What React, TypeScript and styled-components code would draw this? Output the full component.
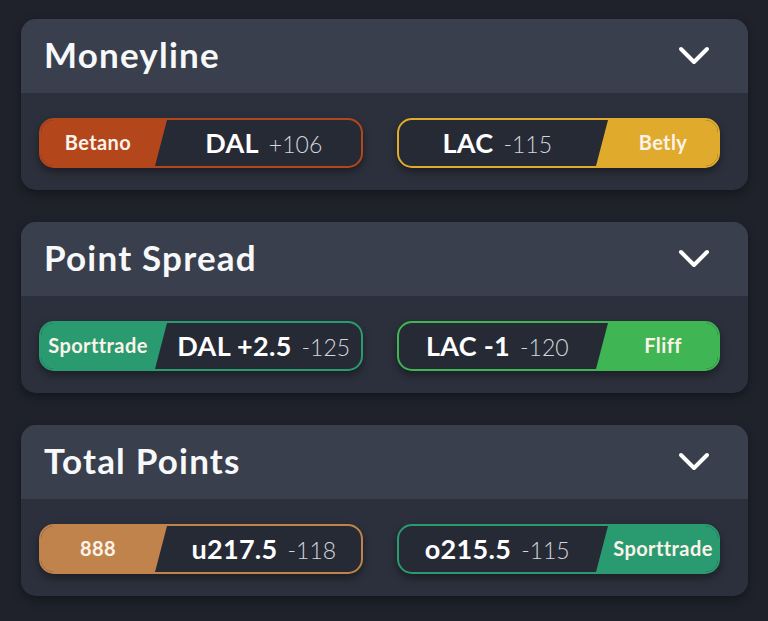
import React from 'react';
import styled, { createGlobalStyle } from 'styled-components';

type Side = 'left' | 'right';

interface Pick {
  book: string;
  color: string;
  label: string;
  odds: string;
  side: Side;
}

interface Market {
  title: string;
  picks: Pick[];
}

const markets: Market[] = [
  {
    title: 'Moneyline',
    picks: [
      { book: 'Betano', color: '#b4461b', label: 'DAL', odds: '+106', side: 'left' },
      { book: 'Betly', color: '#e0aa2c', label: 'LAC', odds: '-115', side: 'right' },
    ],
  },
  {
    title: 'Point Spread',
    picks: [
      { book: 'Sporttrade', color: '#2a9a70', label: 'DAL +2.5', odds: '-125', side: 'left' },
      { book: 'Fliff', color: '#3fb553', label: 'LAC -1', odds: '-120', side: 'right' },
    ],
  },
  {
    title: 'Total Points',
    picks: [
      { book: '888', color: '#c0834b', label: 'u217.5', odds: '-118', side: 'left' },
      { book: 'Sporttrade', color: '#2a9a70', label: 'o215.5', odds: '-115', side: 'right' },
    ],
  },
];

const GlobalStyle = createGlobalStyle`
  html, body {
    margin: 0;
    padding: 0;
    background: #1f222b;
  }
  body {
    font-family: Lato, "Open Sans", "Liberation Sans", sans-serif;
    color: #fff;
  }
`;

const Page = styled.div`
  display: flex;
  flex-direction: column;
  gap: 32px;
  padding: 19px 20px 25px 21px;
`;

const Card = styled.section`
  border-radius: 15px;
  overflow: hidden;
  background: #2c303c;
  box-shadow: 0 4px 10px rgba(0, 0, 0, 0.35);
`;

const Header = styled.div`
  height: 74px;
  display: flex;
  align-items: center;
  justify-content: space-between;
  padding: 0 38px 0 23px;
  background: #3a3f4d;
`;

const Title = styled.h2`
  margin: 0 0 4px;
  font-size: 35px;
  font-weight: 700;
  letter-spacing: 1.2px;
  color: #f7f8fa;
`;

const Body = styled.div`
  height: 97px;
  display: grid;
  grid-template-columns: 1fr 1fr;
  gap: 34px;
  padding: 25px 28px 0 18px;
  box-sizing: border-box;
`;

const Button = styled.div<{ $color: string; $side: Side }>`
  height: 50px;
  box-sizing: border-box;
  display: flex;
  flex-direction: ${({ $side }) => ($side === 'left' ? 'row' : 'row-reverse')};
  border: 2px solid ${({ $color }) => $color};
  border-radius: 15px;
  overflow: hidden;
  background: #262a35;
  box-shadow: 0 4px 8px rgba(0, 0, 0, 0.4);
`;

const Book = styled.div<{ $color: string; $side: Side }>`
  flex: 0 0 ${({ $side }) => ($side === 'left' ? '126px' : '122px')};
  display: flex;
  align-items: center;
  justify-content: center;
  padding: ${({ $side }) => ($side === 'left' ? '0 12px 2px 0' : '0 0 2px 12px')};
  box-sizing: border-box;
  background: ${({ $color }) => $color};
  clip-path: ${({ $side }) =>
    $side === 'left'
      ? 'polygon(0 0, 100% 0, calc(100% - 12px) 100%, 0 100%)'
      : 'polygon(12px 0, 100% 0, 100% 100%, 0 100%)'};
  font-size: 20px;
  font-weight: 700;
  letter-spacing: 0.4px;
  color: #fbf3ea;
  white-space: nowrap;
`;

const Line = styled.div`
  flex: 1;
  display: flex;
  align-items: center;
  justify-content: center;
  padding-bottom: 2px;
`;

const LineText = styled.span`
  white-space: nowrap;
  line-height: 1;
`;

const Label = styled.span`
  font-size: 27px;
  font-weight: 700;
  letter-spacing: 0.3px;
  color: #fff;
  margin-right: 10px;
`;

const Odds = styled.span`
  font-size: 23px;
  font-weight: 300;
  color: #d3d6dc;
`;

const Chevron = () => (
  <svg width="32" height="20" viewBox="0 0 32 20" fill="none">
    <path d="M3 3 L16 16 L29 3" stroke="#fff" strokeWidth="4" strokeLinecap="round" strokeLinejoin="round" />
  </svg>
);

const PickButton = ({ pick }: { pick: Pick }) => (
  <Button $color={pick.color} $side={pick.side}>
    <Book $color={pick.color} $side={pick.side}>
      {pick.book}
    </Book>
    <Line>
      <LineText>
        <Label>{pick.label}</Label>
        <Odds>{pick.odds}</Odds>
      </LineText>
    </Line>
  </Button>
);

const App = () => (
  <>
    <GlobalStyle />
    <Page>
      {markets.map((m) => (
        <Card key={m.title}>
          <Header>
            <Title>{m.title}</Title>
            <Chevron />
          </Header>
          <Body>
            {m.picks.map((p) => (
              <PickButton key={p.side} pick={p} />
            ))}
          </Body>
        </Card>
      ))}
    </Page>
  </>
);

export default App;
